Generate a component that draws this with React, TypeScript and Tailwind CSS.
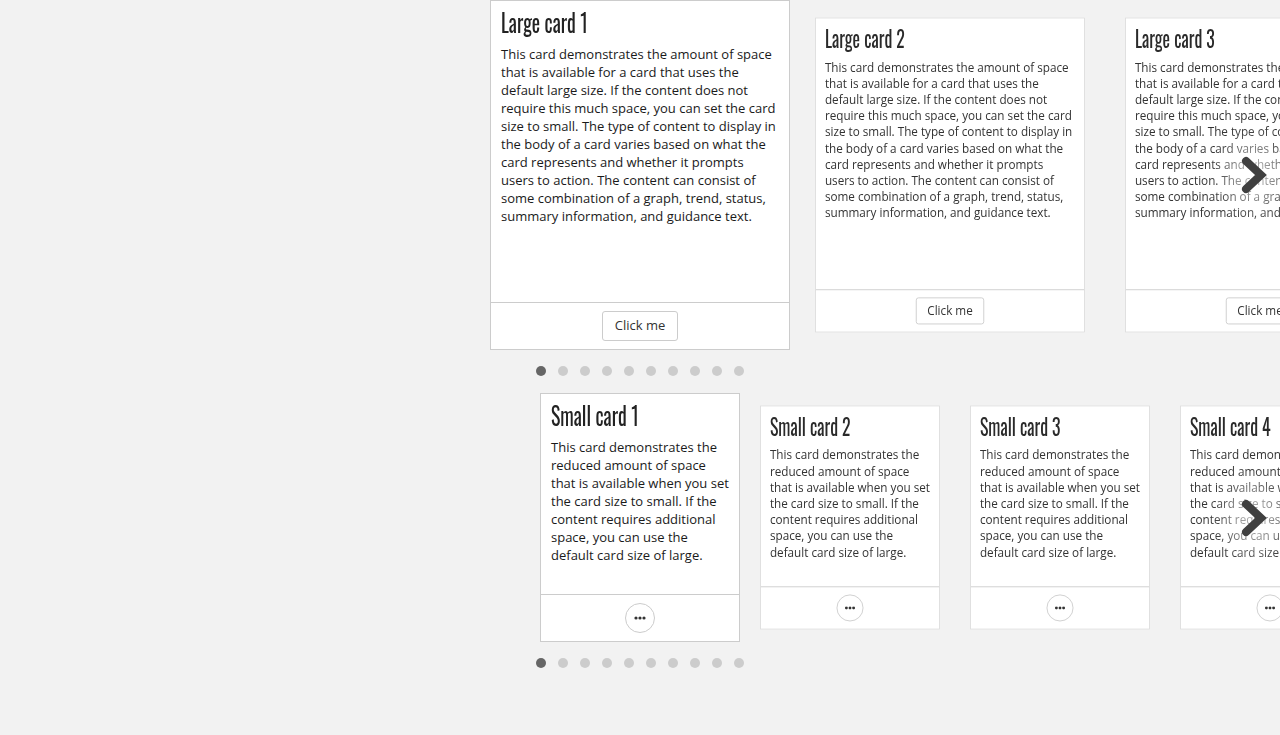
import clsx from 'clsx';

const LARGE_TEXT =
    'This card demonstrates the amount of space that is available for a card that uses the default large size. If the content does not require this much space, you can set the card size to small. The type of content to display in the body of a card varies based on what the card represents and whether it prompts users to action. The content can consist of some combination of a graph, trend, status, summary information, and guidance text.';

const SMALL_TEXT =
    'This card demonstrates the reduced amount of space that is available when you set the card size to small. If the content requires additional space, you can use the default card size of large.';

const titleFont = "font-['Oswald','Liberation_Sans_Narrow','DejaVu_Sans_Condensed',sans-serif]";
const bodyFont = "font-['Open_Sans','Noto_Sans',sans-serif]";

function CardTitle({ children, active }: { children: string; active: boolean }) {
    return (
        <h2
            className={clsx(
                titleFont,
                'h-[36px] text-[26px] leading-[36px] whitespace-nowrap',
                active ? 'text-[#222]' : 'text-[#2a2a2a] mt-[1px]'
            )}
        >
            <span className="inline-block origin-left scale-x-[0.76]">{children}</span>
        </h2>
    );
}

function LargeCard({ index, active }: { index: number; active: boolean }) {
    return (
        <div
            className={clsx(
                'w-[300px] h-[350px] shrink-0 bg-white border flex flex-col',
                active ? 'border-[#cccccc]' : 'scale-90 border-[#dddddd]'
            )}
        >
            <div className="flex-1 px-[10px] pt-[3px]">
                <CardTitle active={active}>{`Large card ${index}`}</CardTitle>
                <p className={clsx('mt-[5px] text-[13px] leading-[18px]', active ? 'text-[#1a1a1a]' : 'text-[#333]')}>
                    {LARGE_TEXT}
                </p>
            </div>
            <div className="h-[47px] border-t border-[#cccccc] flex items-center justify-center">
                <button className="h-[30px] w-[76px] bg-white border border-[#cccccc] rounded-[3px] text-[13px] text-[#333]">
                    Click me
                </button>
            </div>
        </div>
    );
}

function SmallCard({ index, active }: { index: number; active: boolean }) {
    return (
        <div
            className={clsx(
                'w-[200px] h-[249px] shrink-0 bg-white border flex flex-col',
                active ? 'border-[#cccccc]' : 'scale-90 border-[#dddddd]'
            )}
        >
            <div className="flex-1 px-[10px] pt-[3px]">
                <CardTitle active={active}>{`Small card ${index}`}</CardTitle>
                <p className={clsx('mt-[5px] text-[13px] leading-[18px]', active ? 'text-[#1a1a1a]' : 'text-[#333]')}>
                    {SMALL_TEXT}
                </p>
            </div>
            <div className="h-[47px] border-t border-[#cccccc] flex items-center justify-center">
                <button className="h-[30px] w-[30px] rounded-full bg-white border border-[#cccccc] flex items-center justify-center">
                    <svg width="12" height="4" viewBox="0 0 12 4">
                        <circle cx="2" cy="2" r="1.6" fill="#333" />
                        <circle cx="6" cy="2" r="1.6" fill="#333" />
                        <circle cx="10" cy="2" r="1.6" fill="#333" />
                    </svg>
                </button>
            </div>
        </div>
    );
}

function NextArrow() {
    return (
        <div className="absolute right-[13px] top-1/2 -translate-y-1/2 w-[26px] h-[38px] flex items-center justify-center">
            <div className="absolute -inset-[14px] rounded-full bg-white/60 blur-md" />
            <svg width="26" height="38" viewBox="0 0 26 38" className="relative">
                <polyline
                    points="5,5 20,19 5,33"
                    fill="none"
                    stroke="#404040"
                    strokeWidth="8"
                    strokeLinejoin="miter"
                    strokeLinecap="round"
                />
            </svg>
        </div>
    );
}

function Dots() {
    return (
        <div className="flex justify-center gap-[12px] h-[10px]">
            {Array.from({ length: 10 }).map((_, i) => (
                <span key={i} className={clsx('w-[10px] h-[10px] rounded-full', i === 0 ? 'bg-[#666]' : 'bg-[#cccccc]')} />
            ))}
        </div>
    );
}

export default function App() {
    return (
        <div className={clsx(bodyFont, 'w-full h-[735px] bg-[#f2f2f2] overflow-hidden')}>
            {/* Large cards */}
            <div className="relative">
                <div className="flex items-center gap-[10px] pl-[490px] h-[350px]">
                    {[1, 2, 3, 4].map((n) => (
                        <LargeCard key={n} index={n} active={n === 1} />
                    ))}
                </div>
                <NextArrow />
            </div>
            <div className="mt-[16px]">
                <Dots />
            </div>

            {/* Small cards */}
            <div className="relative mt-[17px]">
                <div className="flex items-center gap-[10px] pl-[540px] h-[249px]">
                    {[1, 2, 3, 4, 5].map((n) => (
                        <SmallCard key={n} index={n} active={n === 1} />
                    ))}
                </div>
                <NextArrow />
            </div>
            <div className="mt-[16px]">
                <Dots />
            </div>
        </div>
    );
}
